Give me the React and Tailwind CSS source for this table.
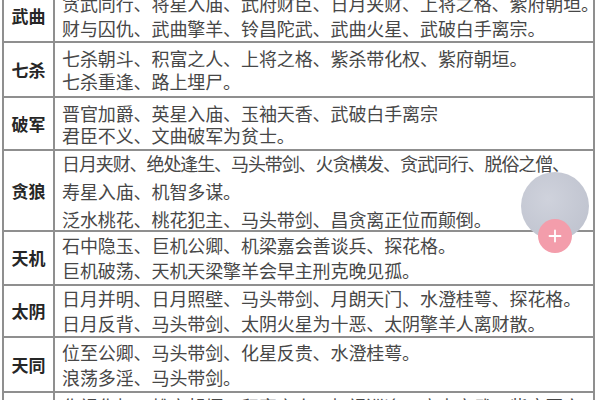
import React from "react";

const rows = [
  {
    label: "武曲",
    h: "h-[53px]",
    lh: "leading-[25px]",
    lines: [
      "贪武同行、将星入庙、武府财臣、日月夹财、上将之格、紫府朝垣。",
      "财与囚仇、武曲擎羊、铃昌陀武、武曲火星、武破白手离宗。",
    ],
  },
  {
    label: "七杀",
    h: "h-[55px]",
    lh: "leading-[23px]",
    lines: ["七杀朝斗、积富之人、上将之格、紫杀带化权、紫府朝垣。", "七杀重逢、路上埋尸。"],
  },
  {
    label: "破军",
    h: "h-[53px]",
    lh: "leading-[22px]",
    lines: ["晋官加爵、英星入庙、玉袖天香、武破白手离宗", "君臣不义、文曲破军为贫士。"],
  },
  {
    label: "贪狼",
    h: "h-[81px]",
    lh: "leading-[28px]",
    lines: [
      "日月夹财、绝处逢生、马头带剑、火贪横发、贪武同行、脱俗之僧、",
      "寿星入庙、机智多谋。",
      "泛水桃花、桃花犯主、马头带剑、昌贪离正位而颠倒。",
    ],
    tight: true,
  },
  {
    label: "天机",
    h: "h-[54px]",
    lh: "leading-[25px]",
    lines: ["石中隐玉、巨机公卿、机梁嘉会善谈兵、探花格。", "巨机破荡、天机天梁擎羊会早主刑克晚见孤。"],
  },
  {
    label: "太阴",
    h: "h-[52px]",
    lh: "leading-[25px]",
    lines: [
      "日月并明、日月照壁、马头带剑、月朗天门、水澄桂萼、探花格。",
      "日月反背、马头带剑、太阴火星为十恶、太阴擎羊人离财散。",
    ],
  },
  {
    label: "天同",
    h: "h-[55px]",
    lh: "leading-[25px]",
    lines: ["位至公卿、马头带剑、化星反贵、水澄桂萼。", "浪荡多淫、马头带剑。"],
  },
  {
    label: "廉贞",
    h: "h-[54px]",
    lh: "leading-[25px]",
    lines: ["化禄化权、雄宿朝垣、积富之人、权禄巡逢、廉贞文武、紫府同宫。", "路上埋尸。"],
  },
];

export default function App() {
  return (
    <div
      className="relative w-[600px] h-[400px] overflow-hidden bg-white"
      style={{ fontFamily: '"Noto Sans CJK SC", "Noto Sans", sans-serif' }}
    >
      <div className="-mt-[10px] ml-[2px] w-[593px] border-x-2 border-[#8f8f8f]">
        {rows.map((r) => (
          <div key={r.label} className={`flex ${r.h} border-b-2 border-[#8f8f8f]`}>
            <div className="w-[51px] shrink-0 border-r-2 border-[#8f8f8f] flex items-center justify-center text-[17px] font-bold text-[#262626]">
              {r.label}
            </div>
            <div
              className={`flex-1 min-w-0 overflow-hidden flex flex-col justify-center pl-[7px] text-[18px] text-[#474747] whitespace-nowrap tracking-[-0.1px] ${r.lh}`}
            >
              {r.lines.map((l, i) => (
                <div key={i} className={r.tight && i === 0 ? "tracking-[-1.1px]" : ""}>
                  {l}
                </div>
              ))}
            </div>
          </div>
        ))}
      </div>

      <div className="absolute left-[521px] top-[172px] w-[68px] h-[68px] rounded-full bg-[radial-gradient(circle_at_40%_40%,#cfd2dc,#bcc0cc)]" />
      <div className="absolute left-[538px] top-[219px] w-[34px] h-[34px] rounded-full bg-[#f39dab] flex items-center justify-center">
        <svg width="14" height="14" viewBox="0 0 14 14">
          <path d="M7 1.5v11M1.5 7h11" stroke="#fff" strokeWidth="1.8" strokeLinecap="round" />
        </svg>
      </div>
    </div>
  );
}
